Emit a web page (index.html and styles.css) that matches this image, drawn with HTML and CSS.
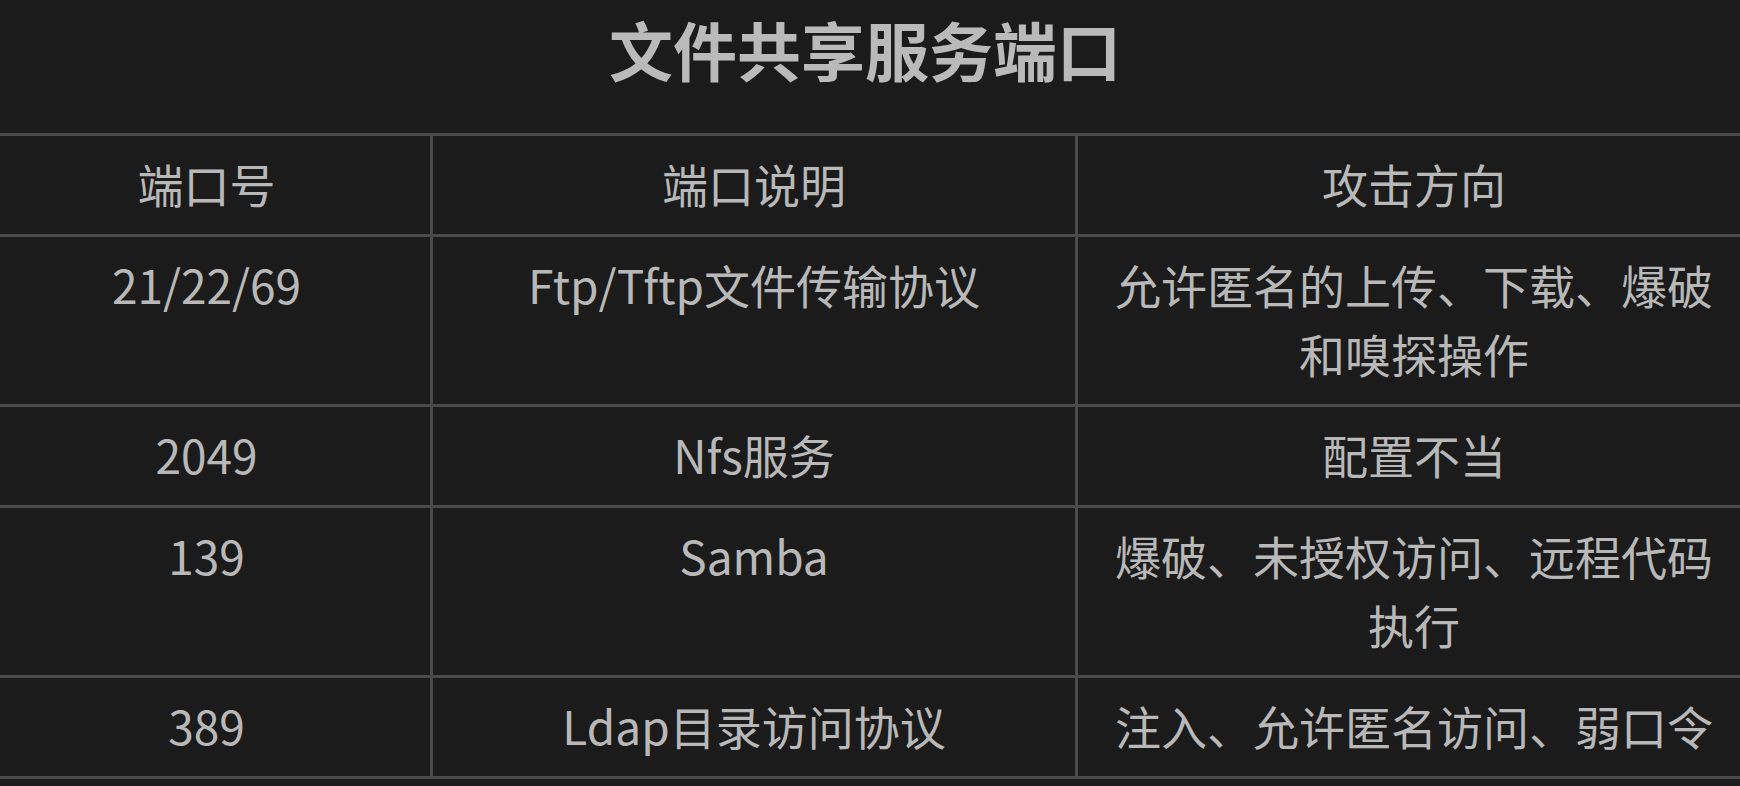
FILE: index.html
```html
<!DOCTYPE html>
<html lang="zh-CN">
<head>
<meta charset="utf-8">
<title>文件共享服务端口</title>
<link rel="stylesheet" href="styles.css">
</head>
<body>
<div class="page">
  <h1 class="title">文件共享服务端口</h1>
  <table class="ports">
    <colgroup>
      <col class="c1">
      <col class="c2">
      <col class="c3">
    </colgroup>
    <thead>
      <tr><th>端口号</th><th>端口说明</th><th>攻击方向</th></tr>
    </thead>
    <tbody>
      <tr><td>21/22/69</td><td>Ftp/Tftp文件传输协议</td><td>允许匿名的上传、下载、爆破和嗅探操作</td></tr>
      <tr><td>2049</td><td>Nfs服务</td><td>配置不当</td></tr>
      <tr><td>139</td><td>Samba</td><td>爆破、未授权访问、远程代码执行</td></tr>
      <tr><td>389</td><td>Ldap目录访问协议</td><td>注入、允许匿名访问、弱口令</td></tr>
    </tbody>
  </table>
</div>
</body>
</html>
```

FILE: styles.css
```css
html, body {
  margin: 0;
  padding: 0;
  background: #1b1b1b;
}
body {
  width: 1740px;
  height: 786px;
  overflow: hidden;
  font-family: "Noto Sans CJK SC", "Noto Sans", sans-serif;
  color: #b8b8b8;
}
.page {
  margin-left: -20px;
  width: 1770px;
}
.title {
  margin: 0;
  padding: 3px 0 40px;
  height: 90px;
  line-height: 90px;
  font-size: 64px;
  font-weight: 700;
  text-align: center;
  color: #bababa;
}
.ports {
  width: 1770px;
  table-layout: fixed;
  border-collapse: collapse;
  font-size: 46px;
  line-height: 69px;
}
.ports .c1 { width: 450px; }
.ports .c2 { width: 645px; }
.ports .c3 { width: 675px; }
.ports th,
.ports td {
  border: 3px solid #4a4a4a;
  padding: 13px 30px 16px;
  text-align: center;
  vertical-align: top;
  font-weight: 400;
}
```
